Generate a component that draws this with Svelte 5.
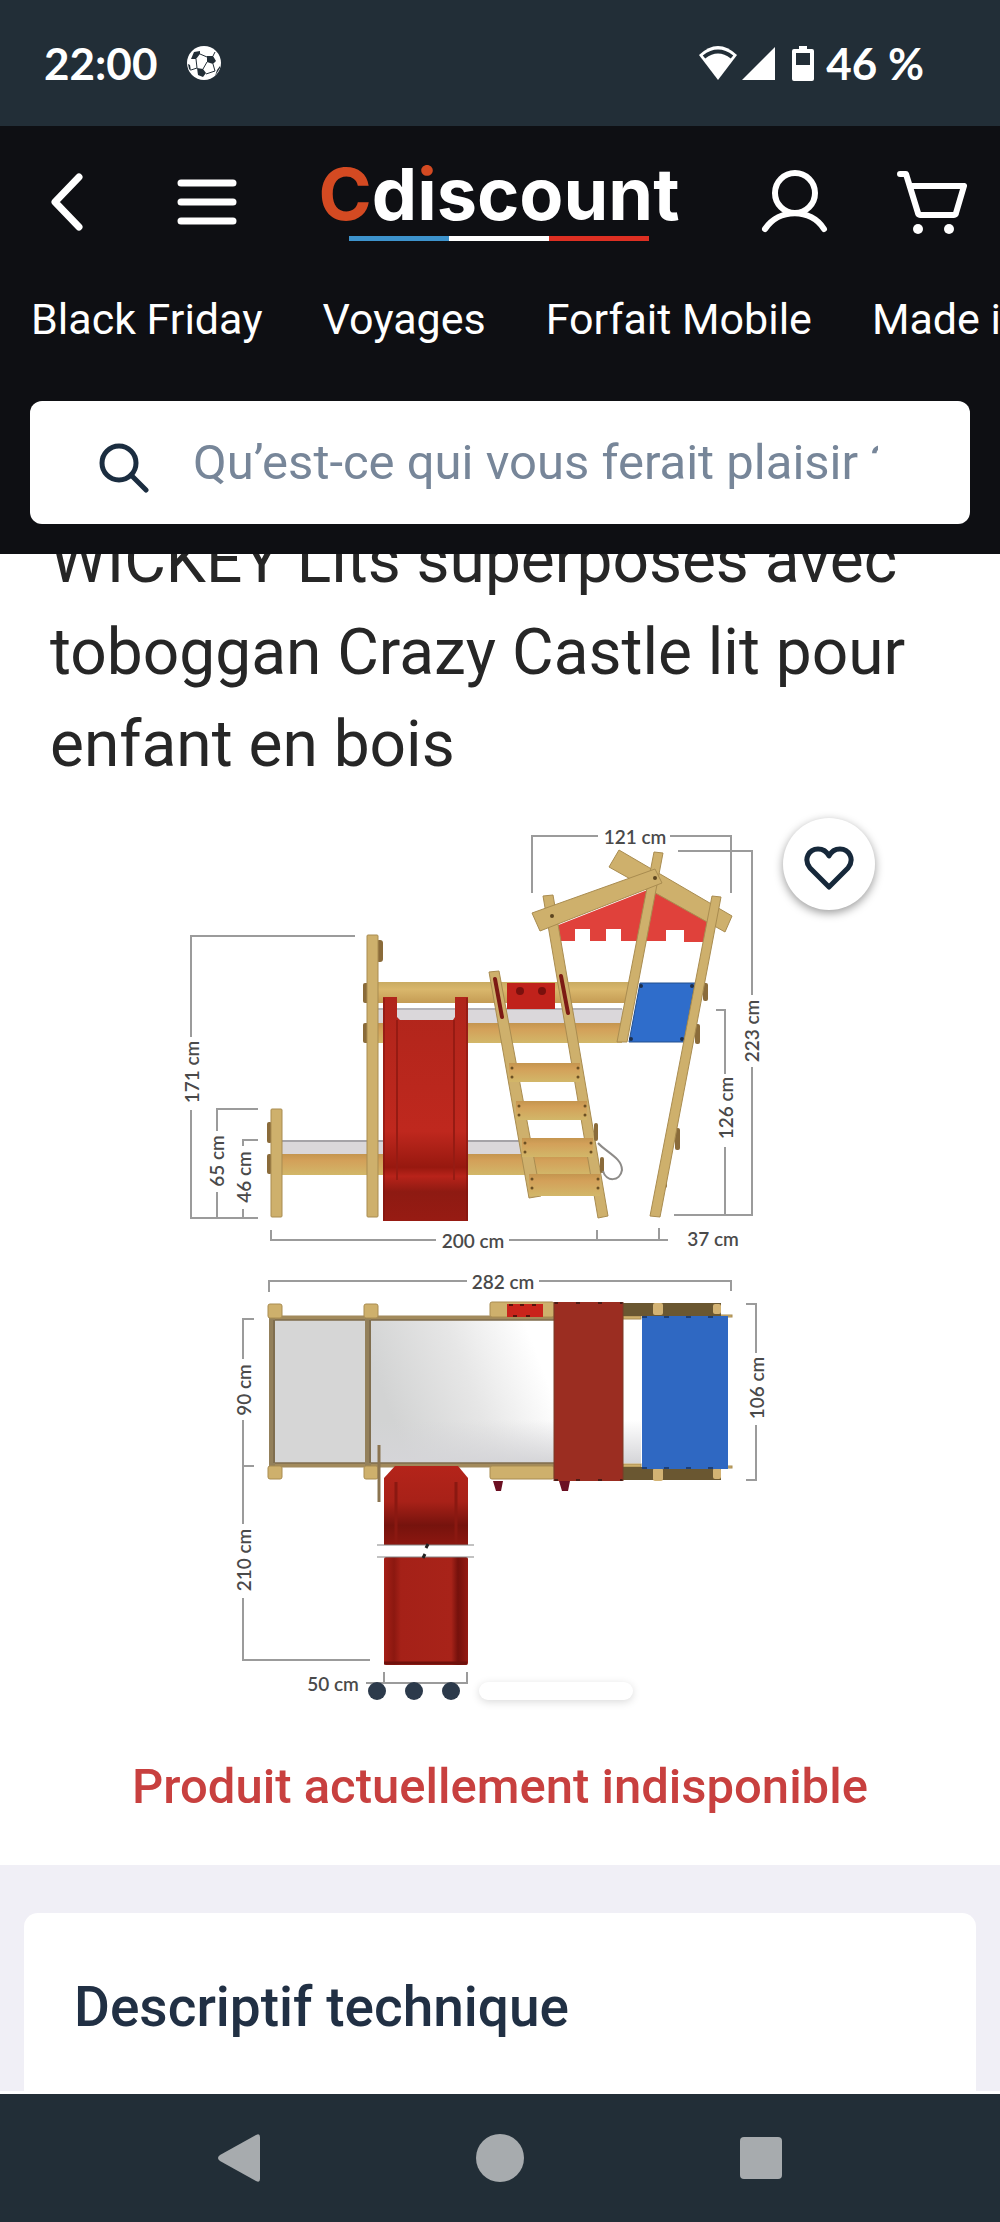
<script>
  const links = ['Black Friday', 'Voyages', 'Forfait Mobile', 'Made in France'];

  // Dimension captions of the product drawing; `v` marks the vertical ones.
  const dims = [
    { t: '121 cm', x: 635, y: 837 },
    { t: '200 cm', x: 473, y: 1241 },
    { t: '37 cm', x: 713, y: 1239 },
    { t: '282 cm', x: 503, y: 1282 },
    { t: '50 cm', x: 333, y: 1684 },
    { t: '171 cm', x: 192, y: 1072, v: true },
    { t: '65 cm', x: 217, y: 1161, v: true },
    { t: '46 cm', x: 244, y: 1177, v: true },
    { t: '223 cm', x: 752, y: 1031, v: true },
    { t: '126 cm', x: 726, y: 1108, v: true },
    { t: '90 cm', x: 244, y: 1390, v: true },
    { t: '210 cm', x: 244, y: 1560, v: true },
    { t: '106 cm', x: 757, y: 1388, v: true }
  ];

  const steps = [
    { x: 509, y: 1063, h: 19 },
    { x: 516, y: 1101, h: 19 },
    { x: 522, y: 1138, h: 19 },
    { x: 529, y: 1174, h: 22 }
  ];
</script>

<div class="screen">
  <div class="status">
    <span class="clock">22:00</span>
    <svg class="ball" viewBox="0 0 34 34" aria-hidden="true">
      <circle cx="17" cy="17" r="17" fill="#fff" />
      <g fill="#222e37">
        <path d="M7 6l6-1 0 3-4 5-5 0z" />
        <path d="M20 10l6 0 3 5-3 3-6-2z" />
        <path d="M10 22l6 1 3 4-3 4-5-2z" />
        <path d="M1 18l2 1 1 6-2-2zM30 24l3-4 0 2-5 8z" />
      </g>
      <path d="M13 8l7 3M20 16l-4 7M9 13l1 9M26 18l2 7-9 3M10 22l-6 2M26 10l2-4" fill="none" stroke="#222e37" stroke-width="1" />
    </svg>
    <span class="grow"></span>
    <svg class="radio" viewBox="0 0 78 35" aria-hidden="true">
      <path d="M1 9Q20-9 39 9L20 34z" fill="#fff" />
      <path d="M6 11Q20 0 34 11" fill="none" stroke="#222e37" stroke-width="4" />
      <path d="M77 1V34H44z" fill="#fff" />
    </svg>
    <svg class="battery" viewBox="0 0 22 35" aria-hidden="true">
      <path d="M7 0h8v3h5a2 2 0 0 1 2 2v28a2 2 0 0 1-2 2H2a2 2 0 0 1-2-2V5a2 2 0 0 1 2-2h5z" fill="#fff" />
      <path d="M4 7h14v12H4z" fill="#222e37" />
    </svg>
    <span class="level">46 %</span>
  </div>

  <header>
    <div class="toolbar">
      <div class="group left">
        <button aria-label="Retour">
          <svg width="32" height="58" viewBox="0 0 32 58"><path d="M28 4L4 29l24 25" /></svg>
        </button>
        <button aria-label="Menu">
          <svg width="60" height="48" viewBox="0 0 60 48"><path d="M4 5h52M4 24h52M4 43h52" /></svg>
        </button>
      </div>
      <a class="logo" href="#accueil">
        <span class="word"><span class="c">C</span>d<span class="i">i</span>scount</span>
        <span class="flag"></span>
      </a>
      <div class="group right">
        <button aria-label="Compte">
          <svg class="thin" width="68" height="64" viewBox="0 0 68 64">
            <circle cx="34" cy="23" r="20" />
            <path d="M4 59C18 38 50 38 63 59" />
          </svg>
        </button>
        <button aria-label="Panier">
          <svg class="thin" width="70" height="64" viewBox="0 0 70 64">
            <path d="M3 4h6l12 39a2 2 0 0 0 2 2h34a2 2 0 0 0 2-2L67 16H13" />
            <circle class="dot" cx="21" cy="59" r="5" />
            <circle class="dot" cx="52" cy="59" r="5" />
          </svg>
        </button>
      </div>
    </div>
    <nav>
      {#each links as link}
        <a href="#rayon">{link}</a>
      {/each}
    </nav>
    <label class="search">
      <svg width="50" height="50" viewBox="0 0 50 50" aria-hidden="true">
        <circle cx="20" cy="20" r="17" />
        <path d="M32 32l15 15" />
      </svg>
      <input type="text" aria-label="Recherche" placeholder="Qu’est-ce qui vous ferait plaisir ?" />
    </label>
  </header>

  <main>
    <section class="product">
      <h1>WICKEY Lits superposés avec toboggan Crazy Castle lit pour enfant en bois</h1>
      <div class="gallery">
        <svg class="drawing" viewBox="0 791 1000 921" role="img" aria-label="Dimensions du lit">
          <defs>
            <linearGradient id="wood" x1="0" y1="0" x2="0" y2="1">
              <stop offset="0" stop-color="#c9ab62" /><stop offset=".35" stop-color="#d9b76c" /><stop offset="1" stop-color="#c59c54" />
            </linearGradient>
            <linearGradient id="plank" x1="0" y1="0" x2="0" y2="1">
              <stop offset="0" stop-color="#c4954f" /><stop offset=".3" stop-color="#d3a059" /><stop offset="1" stop-color="#d2b769" />
            </linearGradient>
            <linearGradient id="slide" x1="0" y1="0" x2="0" y2="1">
              <stop offset="0" stop-color="#b0251b" /><stop offset=".6" stop-color="#bf281e" /><stop offset=".76" stop-color="#97180f" />
              <stop offset=".8" stop-color="#b8231a" /><stop offset=".87" stop-color="#8e1a12" /><stop offset="1" stop-color="#971b13" />
            </linearGradient>
            <linearGradient id="bend" x1="0" y1="0" x2="0" y2="1">
              <stop offset="0" stop-color="#b4241a" /><stop offset=".45" stop-color="#a82118" /><stop offset=".75" stop-color="#76130d" /><stop offset="1" stop-color="#8c1710" />
            </linearGradient>
            <linearGradient id="sheet" x1="0" y1=".3" x2="1" y2="0">
              <stop offset="0" stop-color="#d2d3d3" /><stop offset=".45" stop-color="#e6e6e6" /><stop offset=".85" stop-color="#fff" />
            </linearGradient>
            <linearGradient id="shade" x1="0" y1="0" x2="0" y2="1">
              <stop offset=".7" stop-color="#d5d5d8" stop-opacity="0" /><stop offset="1" stop-color="#d5d5d8" />
            </linearGradient>
            <linearGradient id="edge" x1="0" y1="0" x2="1" y2="0">
              <stop offset="0" stop-color="#a51f17" /><stop offset=".12" stop-color="#8c1810" /><stop offset=".2" stop-color="#a52118" />
              <stop offset=".8" stop-color="#a82319" /><stop offset=".88" stop-color="#75110c" /><stop offset="1" stop-color="#951b13" />
            </linearGradient>
          </defs>

          <g class="rule">
            <path d="M355 936H191V1037M191 1110V1218H258M258 1109H217V1131M217 1192V1218M258 1140H243V1146M243 1209V1218" />
            <path d="M271 1230V1240H436M509 1240H668M597 1230V1240M659 1228V1240" />
            <path d="M532 893V836H598M670 836H731V893M678 851H752V995M752 1067V1215H674M716 1010H725V1074M725 1147V1215" />
            <path d="M269 1292V1281H467M539 1281H731V1291M254 1319H243V1359M243 1420V1524M243 1466H254M243 1598V1660H370" />
            <path d="M366 1683H467V1672M384 1672V1683M746 1304H756V1353M756 1425V1480H746" />
          </g>

          <!-- side view: beds -->
          <g fill="#8a6b3a">
            <rect x="267" y="1122" width="5" height="21" rx="2" /><rect x="267" y="1154" width="5" height="20" rx="2" />
            <rect x="363" y="983" width="6" height="20" rx="2" /><rect x="363" y="1023" width="6" height="20" rx="2" />
            <rect x="376" y="940" width="7" height="22" rx="3" />
          </g>
          <rect x="282" y="1141" width="243" height="13" fill="#dad7da" />
          <path d="M282 1141H525" stroke="#a5a3a8" stroke-width="2" />
          <rect x="282" y="1154" width="308" height="21" fill="url(#plank)" />
          <rect x="378" y="1009" width="250" height="14" fill="#dad7da" />
          <path d="M378 1009H622" stroke="#b5b3b8" stroke-width="2" />
          <rect x="378" y="982" width="252" height="21" fill="url(#wood)" />
          <rect x="378" y="1023" width="244" height="20" fill="url(#plank)" />
          <rect class="w" x="271" y="1109" width="11" height="108" rx="1" />
          <rect class="w" x="367" y="935" width="11" height="282" rx="1" />
          <path d="M383 997H397V1017L400 1020H453L455 1017V997H468V1221H383z" fill="url(#slide)" />
          <path d="M397 1020V1180M454 1020V1180" stroke="#961b13" stroke-width="2" fill="none" />
          <path d="M384 998V1220M467 998V1220" stroke="#7d140e" stroke-width="1" />

          <!-- side view: ladder and tower -->
          <rect x="507" y="983" width="48" height="26" fill="#c0221b" />
          <circle cx="520" cy="991" r="4" fill="#7a100d" /><circle cx="542" cy="991" r="4" fill="#7a100d" />
          <path d="M640 983H695L684 1042H629z" fill="#2f6dcb" stroke="#23508f" />
          <g fill="#1d2f4d"><circle cx="641" cy="986" r="2" /><circle cx="692" cy="986" r="2" /><circle cx="631" cy="1039" r="2" /><circle cx="682" cy="1039" r="2" /></g>
          <path d="M556 926L650 889L710 922L703 942H684V930H666V941H621V929H606V941H590V929H575V941H560z" fill="#e0413b" />
          <path class="w" d="M619 850L732 916L725 932L609 867z" />
          <path class="w" d="M654 852L663 853L627 1042H617z" />
          <g fill="#8a6b3a"><rect x="703" y="983" width="5" height="18" rx="2" /><rect x="695" y="1024" width="5" height="20" rx="2" /><rect x="675" y="1128" width="5" height="22" rx="2" /><rect x="663" y="1180" width="4" height="8" rx="2" /></g>
          <path class="w" d="M712 896L721 897L660 1217L650 1216z" />
          <path class="w" d="M489 972L499 971L541 1196L529 1198z" />
          <path class="w" d="M543 896L553 895L608 1216L598 1218z" />
          {#each steps as s}
            <rect x={s.x} y={s.y} width="71" height={s.h} fill="url(#plank)" />
            <g fill="#6b5024">
              <circle cx={s.x + 3} cy={s.y + 5} r="1.5" /><circle cx={s.x + 3} cy={s.y + 14} r="1.5" />
              <circle cx={s.x + 69} cy={s.y + 5} r="1.5" /><circle cx={s.x + 69} cy={s.y + 14} r="1.5" />
            </g>
          {/each}
          <path class="w" d="M532 913L655 869L662 883L540 931z" />
          <g fill="#5c4520"><circle cx="552" cy="916" r="2" /><circle cx="655" cy="878" r="2" /></g>
          <path d="M495 979L502 1017M561 976L568 1013" stroke="#7c1a14" stroke-width="4" stroke-linecap="round" />
          <rect x="594" y="1123" width="4" height="18" rx="2" fill="#8a6b3a" /><rect x="600" y="1157" width="4" height="16" rx="2" fill="#8a6b3a" />
          <path d="M598 1143C606 1152 622 1158 622 1170C620 1182 606 1182 603 1171" fill="none" stroke="#8d8b88" stroke-width="2" />

          <!-- top view -->
          <rect x="275" y="1320" width="90" height="143" fill="#d6d6d6" />
          <rect x="371" y="1320" width="183" height="143" fill="url(#sheet)" />
          <rect x="371" y="1320" width="183" height="143" fill="url(#shade)" />
          <rect x="623" y="1320" width="18" height="143" fill="url(#shade)" />
          <path d="M272 1318H554M272 1465H554" stroke="#a28a5c" stroke-width="5" />
          <path d="M272 1320H554M272 1463H554" stroke="#6c5d45" stroke-width="1" />
          <path d="M272 1310V1470M368 1310V1470" stroke="#93805b" stroke-width="6" />
          <path d="M274 1320V1463M370 1320V1463" stroke="#6c5d45" stroke-width="1" />
          <g class="w">
            <rect x="268" y="1304" width="14" height="14" rx="2" /><rect x="364" y="1304" width="14" height="14" rx="2" />
            <rect x="268" y="1466" width="14" height="13" rx="2" /><rect x="364" y="1466" width="14" height="13" rx="2" />
            <rect x="490" y="1302" width="64" height="15" rx="2" /><rect x="490" y="1466" width="64" height="13" rx="2" />
            <rect x="623" y="1316" width="18" height="3" /><rect x="623" y="1464" width="18" height="3" />
            <rect x="720" y="1315" width="12" height="2" /><rect x="720" y="1466" width="12" height="2" />
          </g>
          <rect x="507" y="1304" width="36" height="13" fill="#c9231b" />
          <path d="M509 1305h4M520 1305h4M532 1305h4M513 1316h4M526 1316h4" stroke="#57120e" stroke-width="2" />
          <rect x="623" y="1303" width="98" height="13" fill="#6a5731" /><rect x="623" y="1467" width="98" height="13" fill="#6a5731" />
          <g fill="#d3b374">
            <rect x="653" y="1303" width="10" height="12" rx="2" /><rect x="713" y="1304" width="8" height="10" rx="2" />
            <rect x="653" y="1468" width="10" height="13" rx="2" /><rect x="713" y="1468" width="8" height="11" rx="2" />
          </g>
          <path d="M493 1481h10l-2 10h-5zM559 1481h11l-2 10h-6z" fill="#6b0f22" />
          <rect x="554" y="1302" width="69" height="179" fill="#9b2d21" />
          <path d="M554 1303H623M554 1480H623" stroke="#4d1b15" stroke-width="2" stroke-dasharray="4 18" />
          <path d="M554 1302V1481M623 1302V1481" stroke="#7b3a26" stroke-width="1" />
          <rect x="642" y="1316" width="86" height="153" fill="#2f68c2" />
          <path d="M642 1317H728M642 1468H728" stroke="#1c3f78" stroke-width="2" stroke-dasharray="5 17" />
          <path d="M384 1478L395 1466H458L468 1478V1545H384z" fill="url(#bend)" />
          <path d="M396 1482V1545M456 1482V1545" stroke="#8a1811" stroke-width="3" />
          <rect x="384" y="1557" width="84" height="108" rx="2" fill="url(#edge)" />
          <path d="M384 1663H467" stroke="#6f110c" stroke-width="3" />
          <path d="M377 1545H474M377 1557H474" stroke="#858585" stroke-width="1" />
          <path d="M428 1544l-2 4M425 1554l-2 4" stroke="#222" stroke-width="3" />
          <path d="M379 1445V1502" stroke="#8b7450" stroke-width="3" />

          {#each dims as d}
            <text class="dim" x="0" y="7" transform="translate({d.x} {d.y}){d.v ? ' rotate(-90)' : ''}">{d.t}</text>
          {/each}
        </svg>
        <button class="fav" aria-label="Ajouter aux favoris">
          <svg width="50" height="44" viewBox="0 0 50 44"><path d="M25 41L6 22C-1 13 5 3 14 3C19 3 23 6 25 10C27 6 31 3 36 3C45 3 51 13 44 22z" /></svg>
        </button>
        <div class="pager">
          <button aria-label="Image 1"></button>
          <button aria-label="Image 2"></button>
          <button aria-label="Image 3"></button>
          <button class="current" aria-label="Image 4"></button>
        </div>
      </div>
      <p class="stock">Produit actuellement indisponible</p>
    </section>
    <section class="details">
      <div class="card"><h2>Descriptif technique</h2></div>
    </section>
  </main>

  <footer>
    <button aria-label="Précédent"><svg width="48" height="48" viewBox="0 0 48 48"><path d="M41 1Q45-1 45 3V45Q45 49 41 47L5 27Q1 24 5 21z" /></svg></button>
    <button aria-label="Accueil"><svg width="48" height="48" viewBox="0 0 48 48"><circle cx="24" cy="24" r="24" /></svg></button>
    <button aria-label="Applications"><svg width="48" height="48" viewBox="0 0 48 48"><rect x="3" y="3" width="42" height="42" rx="4" /></svg></button>
  </footer>
</div>

<style>
  :global(body) { margin: 0; background: #fff; }
  .screen {
    min-height: 100vh;
    display: flex;
    flex-direction: column;
    font-family: Roboto, "Liberation Sans", sans-serif;
    overflow: hidden;
  }
  button { border: 0; padding: 0; background: none; display: flex; cursor: pointer; }
  a { color: inherit; text-decoration: none; }
  svg { display: block; flex: none; }

  .status {
    display: flex;
    align-items: center;
    height: 126px;
    padding: 0 76px 0 44px;
    background: #222e37;
    color: #fff;
    font: 700 44px/48px Lato, sans-serif;
  }
  .ball { width: 34px; height: 34px; margin-left: 30px; }
  .grow { flex: 1; }
  .radio { width: 78px; height: 35px; margin-right: 16px; }
  .battery { width: 22px; height: 35px; margin-right: 12px; }

  header { position: relative; z-index: 1; background: #0e0f13; color: #fff; padding-bottom: 30px; }
  .toolbar {
    display: flex;
    align-items: center;
    justify-content: space-between;
    height: 152px;
    padding: 0 33px 0 51px;
  }
  .group { display: flex; align-items: center; }
  .left { gap: 94px; }
  .right { gap: 68px; }
  .toolbar svg { fill: none; stroke: #fff; stroke-width: 7; stroke-linecap: round; stroke-linejoin: round; }
  .toolbar .thin { stroke-width: 6; }
  .toolbar svg .dot { fill: #fff; stroke: none; }
  .logo { display: flex; flex-direction: column; align-items: center; gap: 6px; padding-bottom: 6px; }
  .word { font: 700 72px/72px Inter, sans-serif; }
  .c { color: #d44a22; }
  .i {
    background: linear-gradient(#d44a22 36%, #fff 36%);
    -webkit-background-clip: text;
    background-clip: text;
    color: transparent;
  }
  .flag { width: 300px; height: 5px; background: linear-gradient(90deg, #3d93cc 33.3%, #fff 33.3% 66.6%, #dd2f22 66.6%); }

  nav {
    display: flex;
    gap: 60px;
    padding: 17px 0 0 31px;
    overflow: hidden;
    white-space: nowrap;
    font-size: 43px;
    line-height: 48px;
  }
  .search {
    display: flex;
    align-items: center;
    gap: 44px;
    height: 123px;
    box-sizing: border-box;
    margin: 58px 30px 0;
    padding: 0 92px 0 69px;
    border-radius: 12px;
    background: #fff;
  }
  .search svg { fill: none; stroke: #1b2d40; stroke-width: 5; stroke-linecap: round; margin-top: 10px; }
  input {
    flex: 1;
    min-width: 0;
    border: 0;
    outline: 0;
    padding: 0;
    background: none;
    font: 400 49px/56px Roboto, sans-serif;
    color: #1b2d40;
  }
  input::placeholder { color: #778699; opacity: 1; }

  h1 {
    margin: -39px 0 0;
    padding: 0 50px;
    font-weight: 400;
    font-size: 64px;
    line-height: 92px;
    color: #262626;
  }
  .gallery { position: relative; }
  .drawing { width: 100%; height: auto; }
  .rule { fill: none; stroke: #9b9b9b; stroke-width: 2; }
  .w { fill: #ceb06c; stroke: #a98c50; stroke-width: 1; }
  .dim { font: 600 19px Lato, sans-serif; fill: #4a4a4a; text-anchor: middle; }
  .fav {
    position: absolute;
    top: 27px;
    right: 125px;
    width: 92px;
    height: 92px;
    border-radius: 50%;
    align-items: center;
    justify-content: center;
    background: #fff;
    box-shadow: 0 3px 10px rgba(0, 0, 0, .4);
  }
  .fav svg { fill: none; stroke: #16283a; stroke-width: 5; stroke-linejoin: round; margin-top: 8px; }
  .pager {
    position: absolute;
    left: 0;
    right: 0;
    bottom: 12px;
    display: flex;
    justify-content: center;
    gap: 19px;
  }
  .pager button { width: 18px; height: 18px; border-radius: 9px; background: #2c3a4b; }
  .pager .current { width: 154px; background: #fff; box-shadow: 0 2px 8px rgba(0, 0, 0, .15); }
  .stock {
    margin: 0;
    padding: 45px 24px 48px;
    text-align: center;
    font-weight: 500;
    font-size: 49px;
    line-height: 60px;
    color: #c8403f;
  }

  main { flex: 1; display: flex; flex-direction: column; }
  .details { flex: 1; display: flex; padding: 48px 24px 0; background: #f0eff6; border-bottom: 3px solid #fff; }
  .card { flex: 1; padding: 62px 50px 50px; border-radius: 14px 14px 0 0; background: #fff; }
  h2 { margin: 0; font-weight: 500; font-size: 55px; line-height: 64px; color: #213044; }

  footer {
    display: flex;
    justify-content: center;
    align-items: center;
    gap: 213px;
    height: 128px;
    background: #222e37;
  }
  footer svg { fill: #a7abae; }
</style>
